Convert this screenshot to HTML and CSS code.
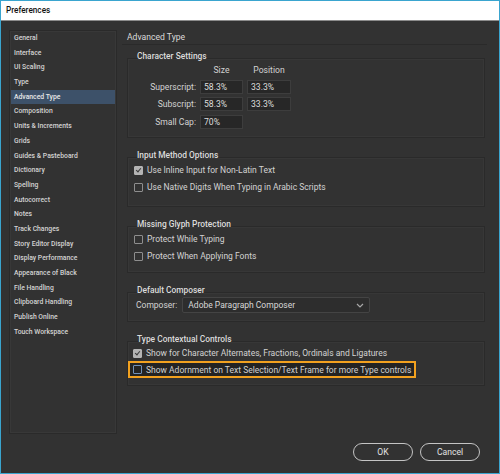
FILE: index.html
```html
<!DOCTYPE html>
<html lang="en">
<head>
    <meta charset="UTF-8">
    <meta name="viewport" content="width=device-width, initial-scale=1.0">
    <title>Preferences</title>
    <link rel="stylesheet" href="styles.css">
</head>
<body>

<div class="dialog">

    <!-- Title Bar -->
    <div class="titlebar">Preferences</div>

    <div class="content">
        <div class="panes">

            <!-- Category List -->
            <ul class="sidebar">
                <li>General</li>
                <li>Interface</li>
                <li>UI Scaling</li>
                <li>Type</li>
                <li class="selected">Advanced Type</li>
                <li>Composition</li>
                <li>Units &amp; Increments</li>
                <li>Grids</li>
                <li>Guides &amp; Pasteboard</li>
                <li>Dictionary</li>
                <li>Spelling</li>
                <li>Autocorrect</li>
                <li>Notes</li>
                <li>Track Changes</li>
                <li>Story Editor Display</li>
                <li>Display Performance</li>
                <li>Appearance of Black</li>
                <li>File Handling</li>
                <li>Clipboard Handling</li>
                <li>Publish Online</li>
                <li>Touch Workspace</li>
            </ul>

            <!-- Settings Pane -->
            <div class="pane">
                <div class="pane-title">Advanced Type</div>

                <div class="group">
                    <div class="group-title">Character Settings</div>
                    <div class="group-box box-chars">
                        <div class="char-grid">
                            <span></span>
                            <span class="col-head">Size</span>
                            <span class="col-head">Position</span>

                            <span class="field-label">Superscript:</span>
                            <span class="field">58.3%</span>
                            <span class="field">33.3%</span>

                            <span class="field-label">Subscript:</span>
                            <span class="field">58.3%</span>
                            <span class="field">33.3%</span>

                            <span class="field-label">Small Cap:</span>
                            <span class="field">70%</span>
                            <span></span>
                        </div>
                    </div>
                </div>

                <div class="group">
                    <div class="group-title">Input Method Options</div>
                    <div class="group-box box-input">
                        <label class="check-row"><span class="checkbox checked"></span>Use Inline Input for Non-Latin Text</label>
                        <label class="check-row"><span class="checkbox"></span>Use Native Digits When Typing in Arabic Scripts</label>
                    </div>
                </div>

                <div class="group">
                    <div class="group-title">Missing Glyph Protection</div>
                    <div class="group-box box-glyph">
                        <label class="check-row"><span class="checkbox"></span>Protect While Typing</label>
                        <label class="check-row"><span class="checkbox"></span>Protect When Applying Fonts</label>
                    </div>
                </div>

                <div class="group">
                    <div class="group-title">Default Composer</div>
                    <div class="group-box box-composer">
                        <div class="composer-row">
                            <span class="composer-label">Composer:</span>
                            <div class="select">
                                <span>Adobe Paragraph Composer</span>
                                <svg width="8" height="5" viewBox="0 0 8 5"><path d="M1 1 L4 4 L7 1" fill="none" stroke="#a8a8a8" stroke-width="1.2"/></svg>
                            </div>
                        </div>
                    </div>
                </div>

                <div class="group">
                    <div class="group-title">Type Contextual Controls</div>
                    <div class="group-box box-context">
                        <label class="check-row"><span class="checkbox checked"></span>Show for Character Alternates, Fractions, Ordinals and Ligatures</label>
                        <label class="check-row focus-row"><span class="checkbox focused"></span>Show Adornment on Text Selection/Text Frame for more Type controls</label>
                    </div>
                </div>
            </div>
        </div>

        <!-- Buttons -->
        <div class="footer">
            <button class="btn">OK</button>
            <button class="btn">Cancel</button>
        </div>
    </div>
</div>

</body>
</html>
```

FILE: styles.css
```css
body {
    margin: 0;
    padding: 0;
    background-color: #323232;
    font-family: Roboto, "Noto Sans", sans-serif;
}

.dialog {
    width: 500px;
    height: 474px;
    box-sizing: border-box;
    border: 1px solid #3aa5cf;
    display: flex;
    flex-direction: column;
    background-color: #323232;
}

/* Title Bar */
.titlebar {
    height: 19px;
    line-height: 19px;
    padding-left: 5px;
    background-color: #ffffff;
    border-bottom: 1px solid #8c8c8c;
    color: #111111;
    font-size: 8.2px;
    font-weight: 500;
}

.content {
    flex: 1;
    padding: 9px 9px 0 8px;
    display: flex;
    flex-direction: column;
}

.panes {
    height: 404px;
    display: flex;
    gap: 5px;
}

/* Sidebar Style */
.sidebar {
    width: 108px;
    box-sizing: border-box;
    margin: 0;
    padding: 0 1px;
    list-style: none;
    border: 1px solid #2a2a2a;
    box-shadow: inset 0 0 0 1px #383838;
}

.sidebar li {
    height: 14.7px;
    line-height: 14.7px;
    padding-left: 3px;
    font-size: 6.8px;
    font-weight: 500;
    color: #d4d4d4;
    white-space: nowrap;
}

.sidebar li.selected {
    background-color: #3d5169;
    color: #e8e8e8;
}

/* Right Pane */
.pane {
    flex: 1;
}

.pane-title {
    height: 14px;
    line-height: 14px;
    padding-left: 5px;
    font-size: 8.6px;
    color: #dadada;
    border-bottom: 1px solid #2a2a2a;
    margin-right: 3px;
}

.group {
    margin: 5px 0 0 5px;
    width: 358px;
}

.group + .group {
    margin-top: 11px;
}

.group-title {
    height: 12px;
    line-height: 12px;
    padding-left: 10px;
    font-size: 8.4px;
    font-weight: 500;
    color: #dcdcdc;
}

.group-box {
    margin-top: -4px;
    border: 1px solid #2a2a2a;
    box-shadow: inset 0 0 0 1px #373737;
    box-sizing: border-box;
}

.box-chars { height: 80px; padding: 5px 0 0 1px; }
.box-input { height: 50px; padding: 5px 0 0 1px; }
.box-glyph { height: 47px; padding: 5px 0 0 1px; }
.box-composer { height: 30px; padding: 4px 0 0 1px; }
.box-context { height: 45px; padding: 4px 0 0 0; }

/* Character Settings */
.char-grid {
    display: grid;
    grid-template-columns: 67px 43px 44px;
    grid-template-rows: 12px 14px 14px 14px;
    column-gap: 4px;
    row-gap: 3.5px;
    font-size: 8.6px;
    color: #d2d2d2;
}

.col-head {
    text-align: center;
    line-height: 12px;
}

.field-label {
    text-align: right;
    line-height: 14px;
}

.field {
    box-sizing: border-box;
    height: 14px;
    line-height: 12px;
    padding-left: 3px;
    background-color: #272727;
    border: 1px solid #3d3d3d;
    color: #dedede;
}

/* Checkboxes */
.check-row {
    display: flex;
    align-items: center;
    height: 14px;
    padding-left: 5px;
    font-size: 8.5px;
    color: #d2d2d2;
    white-space: nowrap;
}

.check-row + .check-row {
    margin-top: 3px;
}

.checkbox {
    width: 9px;
    height: 9px;
    box-sizing: border-box;
    border: 1px solid #8e8e8e;
    border-radius: 1px;
    margin-right: 4px;
    flex-shrink: 0;
    position: relative;
}

.checkbox.checked {
    background-color: #b4b4b4;
    border-color: #b4b4b4;
}

.checkbox.checked::after {
    content: "";
    position: absolute;
    left: 2px;
    top: 0px;
    width: 2px;
    height: 4px;
    border: solid #3a3a3a;
    border-width: 0 1.3px 1.3px 0;
    transform: rotate(40deg);
}

.checkbox.focused {
    border-color: #6f8fb8;
}

.box-context .check-row + .check-row {
    margin-top: 1px;
}

.focus-row {
    width: 288px;
    height: 17px;
    box-sizing: border-box;
    padding-left: 3px;
    border: 2px solid #f2a11f;
    background-color: #232323;
}

/* Composer Dropdown */
.composer-row {
    display: flex;
    align-items: center;
    padding-left: 7px;
    gap: 5px;
    font-size: 8.5px;
    color: #d2d2d2;
}

.select {
    width: 188px;
    height: 16px;
    box-sizing: border-box;
    border: 1px solid #444444;
    background-color: #2d2d2d;
    border-radius: 2px;
    display: flex;
    align-items: center;
    justify-content: space-between;
    padding: 0 5px 0 5px;
    color: #d8d8d8;
}

/* Buttons */
.footer {
    display: flex;
    justify-content: flex-end;
    gap: 7px;
    padding: 9px 10px 0 0;
}

.btn {
    width: 60px;
    height: 18px;
    border: 1.5px solid #c4c4c4;
    border-radius: 9px;
    background-color: #323232;
    color: #e2e2e2;
    font-family: Roboto, "Noto Sans", sans-serif;
    font-size: 8.6px;
    padding: 0;
}
```
